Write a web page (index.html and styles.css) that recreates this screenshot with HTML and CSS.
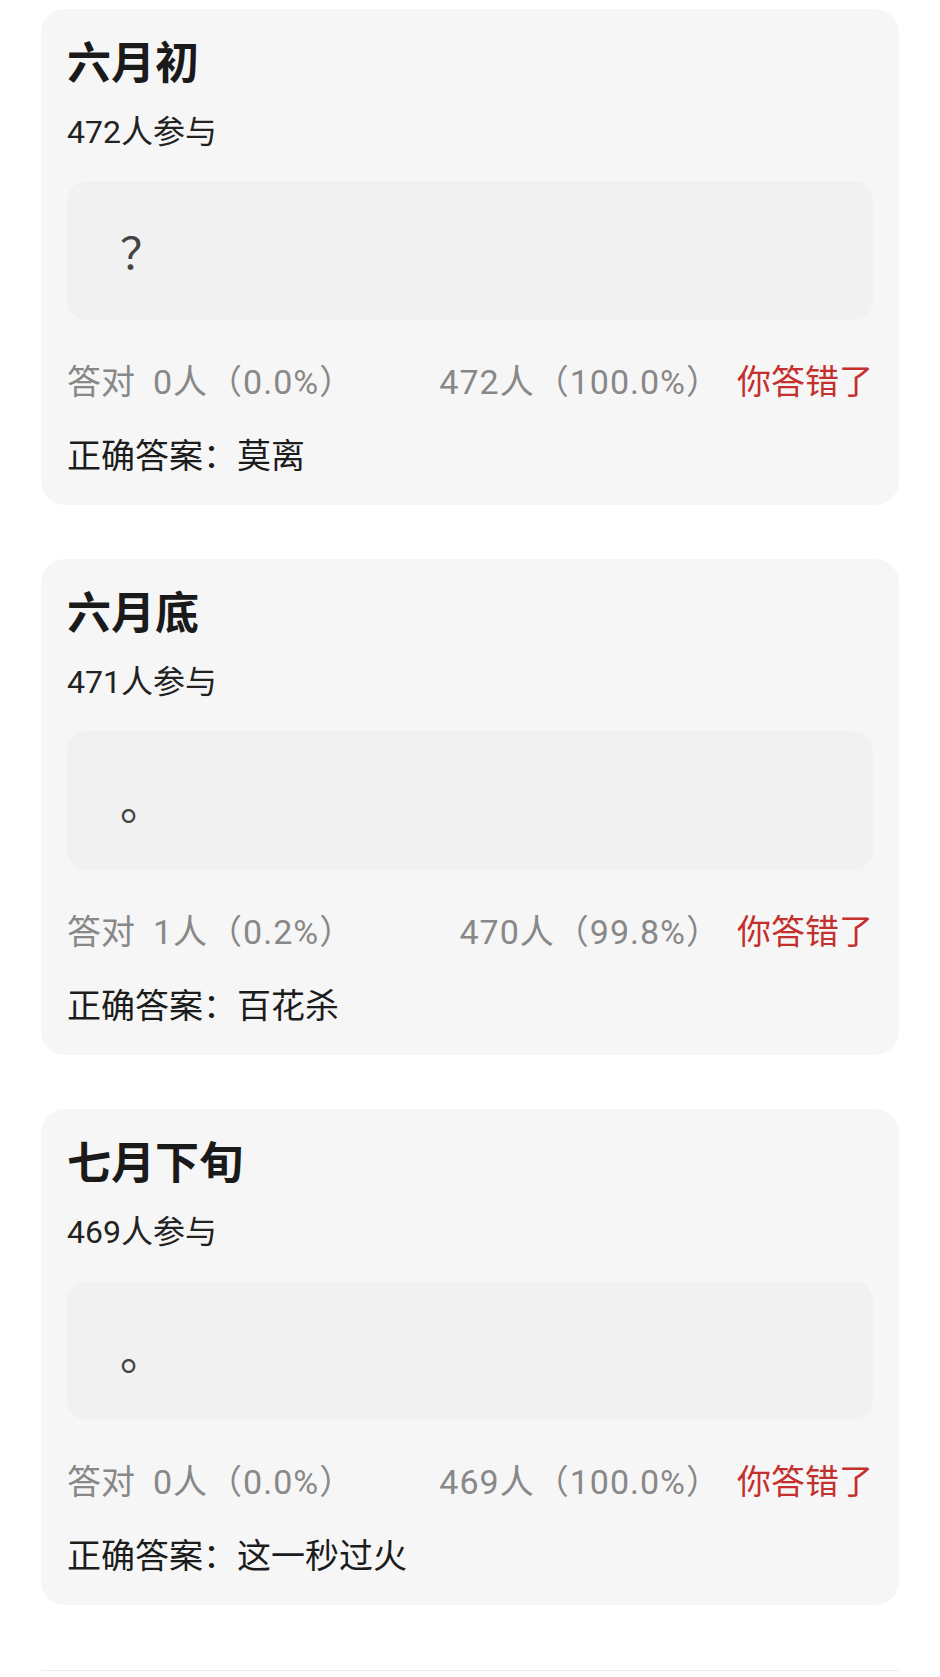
FILE: index.html
```html
<!DOCTYPE html>
<html lang="zh-CN">
<head>
  <meta charset="UTF-8">
  <meta name="viewport" content="width=device-width, initial-scale=1.0">
  <title>答题结果</title>
  <link rel="stylesheet" href="styles.css">
</head>
<body>
  <div class="container">
    <div class="card">
      <h2 class="title">六月初</h2>
      <div class="count">472人参与</div>
      <div class="answer-box">？</div>
      <div class="stats">
        <span class="right-num"><span>答对</span><span class="num gap">0人（0.0%）</span></span>
        <span class="wrong-group">
          <span class="num">472人（100.0%）</span>
          <span class="wrong">你答错了</span>
        </span>
      </div>
      <div class="correct">正确答案：莫离</div>
    </div>

    <div class="card">
      <h2 class="title">六月底</h2>
      <div class="count">471人参与</div>
      <div class="answer-box">。</div>
      <div class="stats">
        <span class="right-num"><span>答对</span><span class="num gap">1人（0.2%）</span></span>
        <span class="wrong-group">
          <span class="num">470人（99.8%）</span>
          <span class="wrong">你答错了</span>
        </span>
      </div>
      <div class="correct">正确答案：百花杀</div>
    </div>

    <div class="card">
      <h2 class="title">七月下旬</h2>
      <div class="count">469人参与</div>
      <div class="answer-box">。</div>
      <div class="stats">
        <span class="right-num"><span>答对</span><span class="num gap">0人（0.0%）</span></span>
        <span class="wrong-group">
          <span class="num">469人（100.0%）</span>
          <span class="wrong">你答错了</span>
        </span>
      </div>
      <div class="correct">正确答案：这一秒过火</div>
    </div>

    <div class="footer-line"></div>
  </div>
</body>
</html>
```

FILE: styles.css
```css
:root {
  --card-bg: #f6f6f6;
  --box-bg: #f1f1f1;
  --text-main: #1c1c1c;
  --text-gray: #888;
  --text-red: #c3302e;
}
body {
  margin: 0;
  background: #fff;
  font-family: Roboto, "Noto Sans CJK SC", sans-serif;
  color: var(--text-main);
}
.container { padding: 9px 41px 0; }

.card {
  background: var(--card-bg);
  border-radius: 24px;
  padding: 25px 26px 25px;
  margin-bottom: 54px;
}
.title {
  margin: 0;
  font-size: 44px;
  line-height: 60px;
  font-weight: 700;
  color: #1a1a1a;
}
.count {
  margin-top: 17px;
  font-size: 32px;
  line-height: 42px;
  color: #222;
}
.answer-box {
  margin-top: 28px;
  height: 139px;
  background: var(--box-bg);
  border-radius: 20px;
  padding-left: 53px;
  display: flex;
  align-items: center;
  font-size: 44px;
  color: #444;
}
.stats {
  margin-top: 38px;
  display: flex;
  justify-content: space-between;
  font-size: 34px;
  line-height: 48px;
  color: var(--text-gray);
}
.num { letter-spacing: 1px; }
.gap { margin-left: 18px; }
.wrong-group { display: flex; }
.wrong { margin-left: 16px; color: var(--text-red); }
.correct {
  margin-top: 26px;
  font-size: 34px;
  line-height: 48px;
  color: var(--text-main);
}

/* bottom divider, its margin collapses with the last card's */
.footer-line {
  margin-top: 65px;
  height: 1px;
  background: #ececec;
}
```
